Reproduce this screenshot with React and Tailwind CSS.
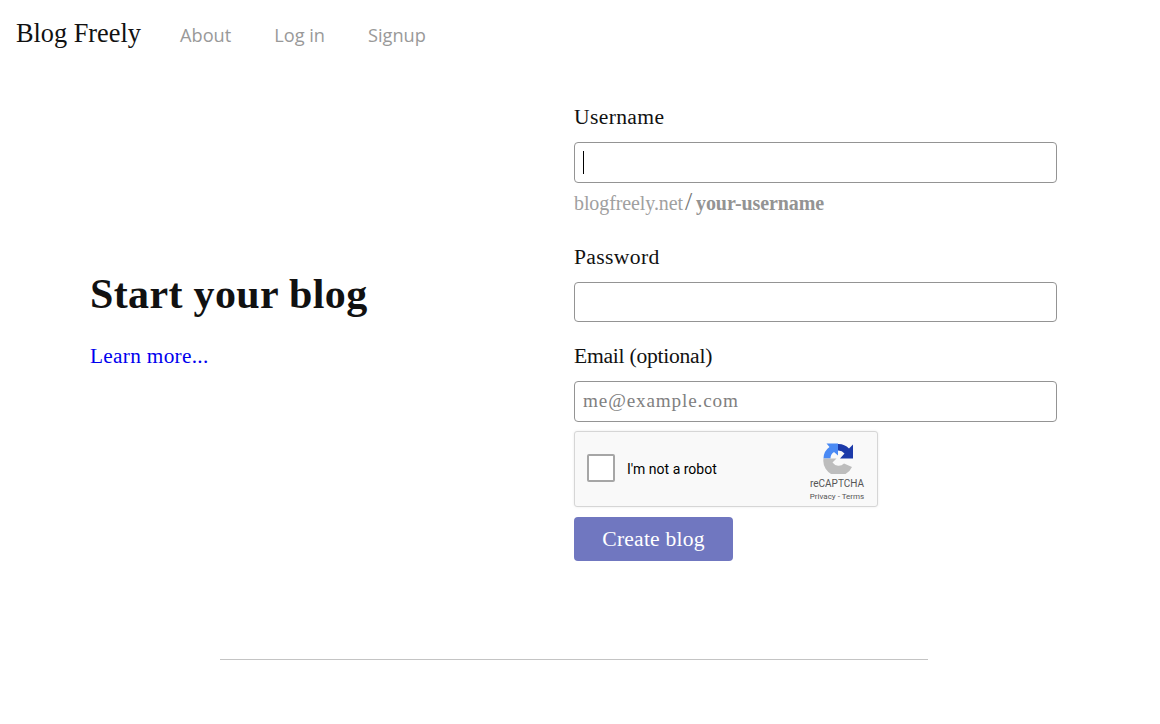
import React from 'react';

const serif = "font-['Liberation_Serif',serif]";

const RecaptchaLogo = () => (
  <svg viewBox="0 0 30 31" className="w-[30px] h-[31px] ml-[2px]">
    {/* light blue arrow, left to top */}
    <path d="M0.5 15.5 L7.5 15.5 A7.5 7.5 0 0 1 11 9 L15 12.5 L15 0.5 L3.5 0.5 L6.5 4 A14 14 0 0 0 0.5 15.5 Z" fill="#4a8af4" />
    {/* dark blue arrow, top to right */}
    <path d="M15 1 A14.5 14.5 0 0 1 26 5.5 L30 1.5 L30 15.5 L17 15.5 L21.5 10.5 A8 8 0 0 0 15 7.5 Z" fill="#1c3aa9" />
    {/* grey arrow, right round the bottom to left */}
    <path d="M0.5 15.5 L13.5 15.5 L9.5 19.5 A7.5 7.5 0 0 0 21 20.5 L29 24 A15 15 0 0 1 0.5 15.5 Z" fill="#bdbdbd" />
  </svg>
);

const Field = ({ label, placeholder, caret, className = '', labelClass = 'tracking-[0.35px]', inputClass = 'h-[41px]' }) => (
  <div className={className}>
    <label className={`block h-[25px] text-[21.6px] leading-[25px] text-[#111] ${labelClass} ${serif}`}>{label}</label>
    <div className="relative mt-[12px]">
      <input
        type="text"
        placeholder={placeholder}
        className={`block w-[483px] px-[8px] pb-[1px] rounded-[4px] border border-[#949494] bg-white text-[19.2px] tracking-[0.85px] outline-none placeholder:text-[#808080] ${inputClass} ${serif}`}
      />
      {caret && <span className="absolute left-[9px] top-[9px] w-px h-[23px] bg-black" />}
    </div>
  </div>
);

const App = () => {
  return (
    <div className="w-[1160px] h-[724px] bg-white overflow-hidden">
      {/* Header */}
      <header className="flex items-center h-[70px] pl-4">
        <a className={`text-[26.3px] leading-[66px] pb-[2px] text-[#111] w-[164px] ${serif}`}>Blog Freely</a>
        <nav className="flex gap-[43px] font-['Open_Sans',sans-serif] text-[18.2px] text-[#999] pt-[1px]">
          <a>About</a>
          <a>Log in</a>
          <a>Signup</a>
        </nav>
      </header>

      {/* Signup form */}
      <main className="flex pl-[90px] pt-[35px]">
        <div className="w-[484px] h-[431px] flex flex-col justify-center pb-[4px]">
          <h1 className={`text-[42px] leading-[50px] font-bold text-[#111] tracking-[0.35px] ${serif}`}>Start your blog</h1>
          <a className={`mt-[24px] text-[21.3px] leading-[26px] text-[#0000ee] tracking-[0.3px] ${serif}`}>Learn more...</a>
        </div>

        <form className="w-[483px]">
          <Field label="Username" caret />
          <p className={`mt-[8px] h-[24px] text-[20px] leading-[24px] text-[#a0a0a0] tracking-[-0.1px] ${serif}`}>
            blogfreely.net<span className="ml-[2px] mr-[4px] text-[26px] leading-[0] text-[#777]">/</span><b className="text-[#939393]">your-username</b>
          </p>
          <Field label="Password" className="mt-[30px]" inputClass="h-[40px]" />
          <Field label="Email (optional)" placeholder="me@example.com" className="mt-[22px]" labelClass="tracking-[-0.25px]" />

          {/* reCAPTCHA box */}
          <div className="flex mt-[9px] w-[304px] h-[76px] rounded-[3px] border border-[#d6d6d6] bg-[#f9f9f9] shadow-[0_0_3px_rgba(0,0,0,0.08)] font-['Roboto',sans-serif]">
            <span className="self-center ml-[12px] mb-[2px] w-[28px] h-[28px] rounded-[2px] border-2 border-[#a6a6a6] bg-white" />
            <span className="self-center ml-[12px] text-[14px] text-black">I'm not a robot</span>
            <div className="ml-auto mr-[12px] w-[56px] flex flex-col items-center pt-[11px]">
              <RecaptchaLogo />
              <span className="mt-[3px] text-[10px] leading-[14px] text-[#555]">reCAPTCHA</span>
              <span className="mt-[1px] text-[8px] leading-[10px] text-[#555] whitespace-nowrap">Privacy - Terms</span>
            </div>
          </div>

          <button
            type="button"
            className={`block mt-[10px] w-[159px] h-[44px] rounded-[4px] bg-[#7077c0] text-white text-[21.6px] tracking-[0.2px] ${serif}`}
          >
            Create blog
          </button>
        </form>
      </main>

      <hr className="ml-[220px] mt-[98px] w-[708px] border-t border-[#c4c4c4]" />
    </div>
  );
};

export default App;
